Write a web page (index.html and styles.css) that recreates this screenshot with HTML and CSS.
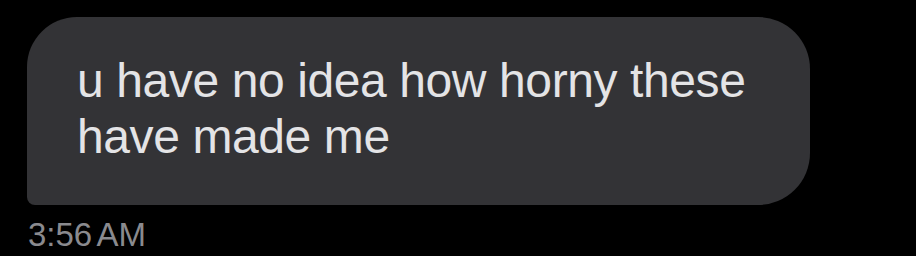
FILE: index.html
```html
<!DOCTYPE html>
<html lang="en">
<head>
<meta charset="utf-8">
<link rel="stylesheet" href="styles.css">
<title>Message</title>
</head>
<body>
<div class="thread">
  <div class="bubble">u have no idea how horny these have made me</div>
  <div class="time">3:56 AM</div>
</div>
</body>
</html>
```
FILE: styles.css
```css
html, body {
  margin: 0;
  padding: 0;
  background: #000;
  width: 916px;
  height: 256px;
  overflow: hidden;
}
.thread {
  display: flex;
  flex-direction: column;
  align-items: flex-start;
  padding: 17px 0 0 27px;
  font-family: "Liberation Sans", Arial, sans-serif;
}
.bubble {
  box-sizing: border-box;
  width: 783px;
  padding: 36px 24px 40px 50px;
  background: #333336;
  color: #e4e4e6;
  font-size: 48px;
  line-height: 56px;
  letter-spacing: -0.4px;
  border-radius: 50px 52px 52px 8px;
}
.time {
  margin-top: 10px;
  margin-left: 1px;
  color: #8a8a8e;
  font-size: 33px;
  line-height: 40px;
  word-spacing: -3px;
}
```
